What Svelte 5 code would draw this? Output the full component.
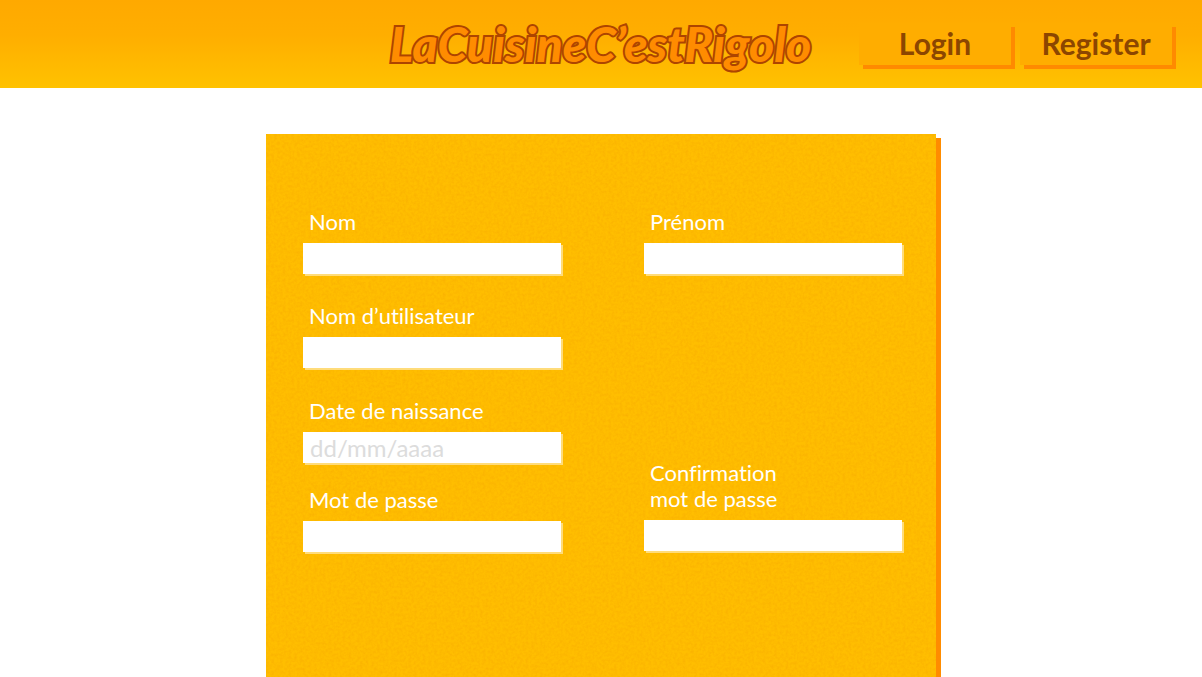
<script>
  const fields = [
    { id: 'nom', label: 'Nom', area: 'nom', type: 'text' },
    { id: 'prenom', label: 'Prénom', area: 'prenom', type: 'text' },
    { id: 'utilisateur', label: 'Nom d’utilisateur', area: 'user', type: 'text' },
    { id: 'naissance', label: 'Date de naissance', area: 'date', type: 'text', placeholder: 'dd/mm/aaaa' },
    { id: 'passe', label: 'Mot de passe', area: 'pass', type: 'password' },
    { id: 'confirmation', label: 'Confirmation\nmot de passe', area: 'confirm', type: 'password' }
  ];
</script>

<div class="page">
  <header>
    <a class="logo" href="#accueil">LaCuisineC’estRigolo</a>
    <nav>
      <button type="button">Login</button>
      <button type="button">Register</button>
    </nav>
  </header>

  <main>
    <form>
      <svg class="grain" aria-hidden="true">
        <filter id="grain" x="0" y="0" width="100%" height="100%" color-interpolation-filters="sRGB">
          <feTurbulence type="fractalNoise" baseFrequency="0.35" numOctaves="3" seed="4" />
          <feColorMatrix values="0 0 0 0 0.95  0 0 0 0 0.62  0 0 0 0 0  0.6 0 0 0 -0.2" />
        </filter>
        <rect width="100%" height="100%" filter="url(#grain)" />
      </svg>
      {#each fields as field}
        <div class="field {field.area}">
          <label for={field.id}>{field.label}</label>
          <input id={field.id} type={field.type} placeholder={field.placeholder} />
        </div>
      {/each}
    </form>
  </main>
</div>

<style>
  :global(body) {
    margin: 0;
    background: #fff;
  }

  .page {
    display: flex;
    flex-direction: column;
    min-height: 100vh;
    font-family: Lato, "Noto Sans", sans-serif;
  }

  header {
    display: grid;
    grid-template-columns: 1fr auto 1fr;
    align-items: center;
    box-sizing: border-box;
    min-height: 88px;
    padding: 0 30px 0 29px;
    background: linear-gradient(#ffa900 0%, #ffae00 40%, #ffc200 100%);
  }

  .logo {
    grid-column: 2;
    font: italic 900 48px/60px Lato, sans-serif;
    color: #ff8c00;
    text-decoration: none;
    -webkit-text-stroke: 4px #ad4500;
    stroke-linejoin: round;
    paint-order: stroke fill;
  }

  nav {
    display: flex;
    justify-content: flex-end;
    gap: 9px;
  }

  button {
    width: 152px;
    height: 42px;
    padding: 0 0 2px;
    border: 0;
    background: #ffad00;
    box-shadow: 4px 4px #ff8a00;
    color: #8c4600;
    font: bold 30px/40px Lato, sans-serif;
    cursor: pointer;
  }

  main {
    display: flex;
    flex: 1;
    justify-content: center;
    padding-top: 46px;
  }

  form {
    position: relative;
    display: grid;
    grid-template-columns: 1fr 1fr;
    grid-template-rows: 69px 70px 64px 64px;
    grid-template-areas:
      "nom prenom"
      "user ."
      "date confirm"
      "pass confirm";
    gap: 25px 83px;
    box-sizing: border-box;
    width: 100%;
    max-width: 670px;
    padding: 75px 34px 75px 37px;
    background: #ffbe00;
    box-shadow: 5px 4px #ff8c00;
  }

  .grain {
    position: absolute;
    inset: 0;
    width: 100%;
    height: 100%;
    pointer-events: none;
  }

  .field {
    position: relative;
    display: flex;
    flex-direction: column;
    gap: 8px;
    align-self: start;
  }

  .nom { grid-area: nom; }
  .prenom { grid-area: prenom; }
  .user { grid-area: user; }
  .date { grid-area: date; }
  .pass { grid-area: pass; }
  .confirm { grid-area: confirm; align-self: end; }

  label {
    padding-left: 6px;
    color: #fff;
    font-size: 22px;
    line-height: 26px;
    font-variant-ligatures: none;
    white-space: pre-line;
  }

  input {
    box-sizing: border-box;
    width: 100%;
    height: 31px;
    padding: 0 7px;
    border: 0;
    background: #fff;
    box-shadow: 2px 2px #ffdc7a;
    color: #555;
    font: 24px/31px Lato, sans-serif;
  }

  input::placeholder {
    color: #dcdcdc;
    opacity: 1;
  }
</style>
